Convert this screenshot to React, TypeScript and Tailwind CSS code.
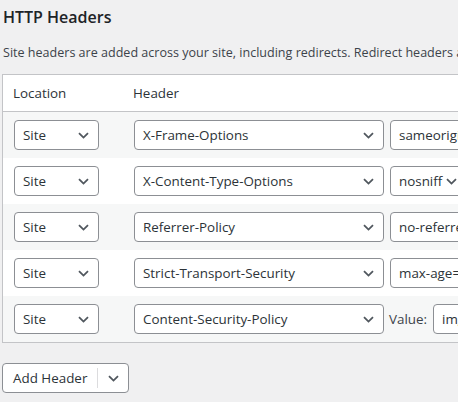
import React from 'react'

const rows = [
  { location: 'Site', header: 'X-Frame-Options', value: 'sameorigin', kind: 'select' },
  { location: 'Site', header: 'X-Content-Type-Options', value: 'nosniff', kind: 'short' },
  { location: 'Site', header: 'Referrer-Policy', value: 'no-referrer-when-downgrade', kind: 'select' },
  { location: 'Site', header: 'Strict-Transport-Security', value: 'max-age=31536000', kind: 'select' },
  { location: 'Site', header: 'Content-Security-Policy', value: 'img-src', kind: 'input' },
]

function Chevron({ className = '' }: { className?: string }) {
  return (
    <svg width="11" height="7" viewBox="0 0 11 7" className={className}>
      <path d="M1 1.2 L5.5 5.6 L10 1.2" fill="none" stroke="#50575e" strokeWidth="1.8" />
    </svg>
  )
}

function FakeSelect({ label, width, gap = 'ml-2' }: { label: string; width: string; gap?: string }) {
  return (
    <div
      className={`${width} h-[30px] shrink-0 flex items-center justify-between bg-white border border-[#8c8f94] rounded-[4px] pl-[8px] pr-[9px] text-[13.4px] text-[#2c3338] whitespace-nowrap`}
    >
      <span>{label}</span>
      <Chevron className={`shrink-0 ${gap}`} />
    </div>
  )
}

export default function App() {
  return (
    <div
      className="w-[458px] h-[402px] overflow-hidden bg-[#f0f0f1] text-[#3c434a]"
      style={{ fontFamily: '"Open Sans", "Noto Sans", sans-serif' }}
    >
      <div className="pl-[3px] pt-[5px]">
        <h2 className="text-[16px] font-semibold text-[#1d2327] leading-[24px]">HTTP Headers</h2>
        <p className="mt-[14px] text-[12.55px] leading-[20px] whitespace-nowrap">
          Site headers are added across your site, including redirects. Redirect headers are only added to redirects.
        </p>
      </div>

      {/* テーブル */}
      <div className="ml-[2px] mt-[11px] w-[600px] bg-white border border-[#c3c4c7]">
        <div className="h-[37px] flex items-center border-b border-[#c3c4c7] text-[13.4px] text-[#2c3338]">
          <div className="w-[120px] pl-[10px]">Location</div>
          <div className="pl-[10px]">Header</div>
        </div>
        {rows.map((r, i) => (
          <div
            key={i}
            className={`h-[46px] flex items-center overflow-hidden ${i % 2 === 0 ? 'bg-[#f6f7f7]' : 'bg-white'}`}
          >
            <div className="pl-[11px] w-[131px] shrink-0">
              <FakeSelect label={r.location} width="w-[85px]" />
            </div>
            <FakeSelect label={r.header} width="w-[250px]" />
            {r.kind === 'input' ? (
              <div className="flex items-center ml-[5px] shrink-0">
                <span className="text-[13.4px] text-[#3c434a]">Value:</span>
                <div className="ml-[6px] w-[200px] h-[30px] flex items-center bg-white border border-[#8c8f94] rounded-[4px] pl-[8px] text-[13.4px] text-[#2c3338]">
                  {r.value}
                </div>
              </div>
            ) : r.kind === 'short' ? (
              <div className="ml-[6px] shrink-0">
                <FakeSelect label={r.value} width="w-[76px]" gap="ml-[4px]" />
              </div>
            ) : (
              <div className="ml-[6px] shrink-0">
                <FakeSelect label={r.value} width="w-[190px]" />
              </div>
            )}
          </div>
        ))}
      </div>

      <div className="ml-[2px] mt-[20px] w-[127px] h-[30px] flex items-center bg-white border border-[#8c8f94] rounded-[4px] text-[13.4px] text-[#2c3338]">
        <span className="pl-[10px] w-[94px]">Add Header</span>
        <span className="h-[20px] border-l border-[#dcdcde]" />
        <span className="flex-1 flex justify-center">
          <Chevron />
        </span>
      </div>
    </div>
  )
}
